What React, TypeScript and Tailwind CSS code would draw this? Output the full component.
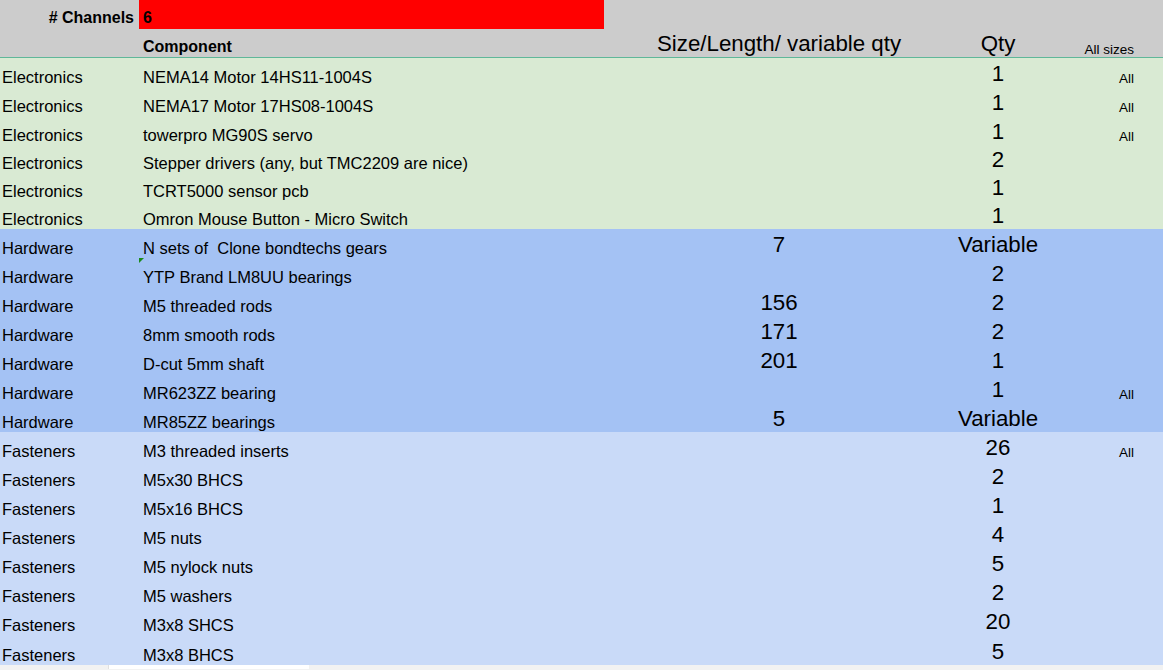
import React from 'react'

type Row = { cat: string; name: string; size?: string; qty: string; all?: boolean; h?: number; flag?: boolean }

const GROUPS: { bg: string; rows: Row[] }[] = [
  {
    bg: 'bg-[#d9ead3]',
    rows: [
      { cat: 'Electronics', name: 'NEMA14 Motor 14HS11-1004S', qty: '1', all: true, h: 29 },
      { cat: 'Electronics', name: 'NEMA17 Motor 17HS08-1004S', qty: '1', all: true, h: 29 },
      { cat: 'Electronics', name: 'towerpro MG90S servo', qty: '1', all: true, h: 29 },
      { cat: 'Electronics', name: 'Stepper drivers (any, but TMC2209 are nice)', qty: '2', h: 28 },
      { cat: 'Electronics', name: 'TCRT5000 sensor pcb', qty: '1', h: 28 },
      { cat: 'Electronics', name: 'Omron Mouse Button - Micro Switch', qty: '1', h: 28 },
    ],
  },
  {
    bg: 'bg-[#a4c2f4]',
    rows: [
      { cat: 'Hardware', name: 'N sets of \u00a0Clone bondtechs gears', size: '7', qty: 'Variable' },
      { cat: 'Hardware', name: 'YTP Brand LM8UU bearings', qty: '2', flag: true },
      { cat: 'Hardware', name: 'M5 threaded rods', size: '156', qty: '2' },
      { cat: 'Hardware', name: '8mm smooth rods', size: '171', qty: '2' },
      { cat: 'Hardware', name: 'D-cut 5mm shaft', size: '201', qty: '1' },
      { cat: 'Hardware', name: 'MR623ZZ bearing', qty: '1', all: true },
      { cat: 'Hardware', name: 'MR85ZZ bearings', size: '5', qty: 'Variable' },
    ],
  },
  {
    bg: 'bg-[#c9daf8]',
    rows: [
      { cat: 'Fasteners', name: 'M3 threaded inserts', qty: '26', all: true },
      { cat: 'Fasteners', name: 'M5x30 BHCS', qty: '2' },
      { cat: 'Fasteners', name: 'M5x16 BHCS', qty: '1' },
      { cat: 'Fasteners', name: 'M5 nuts', qty: '4' },
      { cat: 'Fasteners', name: 'M5 nylock nuts', qty: '5' },
      { cat: 'Fasteners', name: 'M5 washers', qty: '2' },
      { cat: 'Fasteners', name: 'M3x8 SHCS', qty: '20' },
      { cat: 'Fasteners', name: 'M3x8 BHCS', qty: '5', h: 30 },
    ],
  },
]

const COLS = 'grid grid-cols-[139px_465px_350px_88px_1fr] items-end'

function SheetRow({ r }: { r: Row }) {
  return (
    <div className={COLS} style={{ height: r.h ?? 29 }}>
      <div className="pl-[2px] pb-[2px] text-[16.5px] leading-none whitespace-nowrap">{r.cat}</div>
      <div className="relative h-full flex items-end pl-[4px] pb-[2px] text-[16.5px] leading-none whitespace-nowrap">
        {r.flag && (
          <span className="absolute left-0 top-0 w-0 h-0 border-t-[5px] border-t-[#1a8a1a] border-r-[5px] border-r-transparent" />
        )}
        {r.name}
      </div>
      <div className="pb-[2px] text-center text-[22.3px] leading-none">{r.size ?? ''}</div>
      <div className="pb-[2px] text-center text-[22.3px] leading-none whitespace-nowrap">{r.qty}</div>
      <div className="pr-[29px] pb-[2px] text-right text-[13.5px] leading-none">{r.all ? 'All' : ''}</div>
    </div>
  )
}

export default function App() {
  return (
    <div className="w-[1163px] h-[670px] overflow-hidden bg-[#f2f2f2] text-black font-['Liberation_Sans',Arial,sans-serif]">
      {/* header */}
      <div className="bg-[#cccccc]">
        <div className={`${COLS} h-[29px]`}>
          <div className="pr-[5px] pb-[3px] text-right text-[16px] font-bold leading-none">{'# Channels'}</div>
          <div className="h-full flex items-end bg-[#ff0000] pl-[4px] pb-[3px] text-[16px] font-bold leading-none">6</div>
          <div />
          <div />
          <div />
        </div>
        <div className={`${COLS} h-[28px]`}>
          <div />
          <div className="pl-[4px] pb-[2px] text-[16px] font-bold leading-none">Component</div>
          <div className="pb-[2px] text-center text-[22.3px] leading-none whitespace-nowrap">Size/Length/ variable qty</div>
          <div className="pb-[2px] text-center text-[22.3px] leading-none">Qty</div>
          <div className="pr-[29px] pb-[1px] text-right text-[13.5px] leading-none whitespace-nowrap">All sizes</div>
        </div>
      </div>
      <div className="h-px bg-[#5fb799]" />

      {GROUPS.map((g, i) => (
        <div key={i} className={g.bg}>
          {g.rows.map((r, j) => <SheetRow key={j} r={r} />)}
        </div>
      ))}

      <div className="flex h-[4px]">
        <div className="w-[108px]" />
        <div className="w-[201px] bg-white border-l border-[#e0e0e0]" />
      </div>
    </div>
  )
}
